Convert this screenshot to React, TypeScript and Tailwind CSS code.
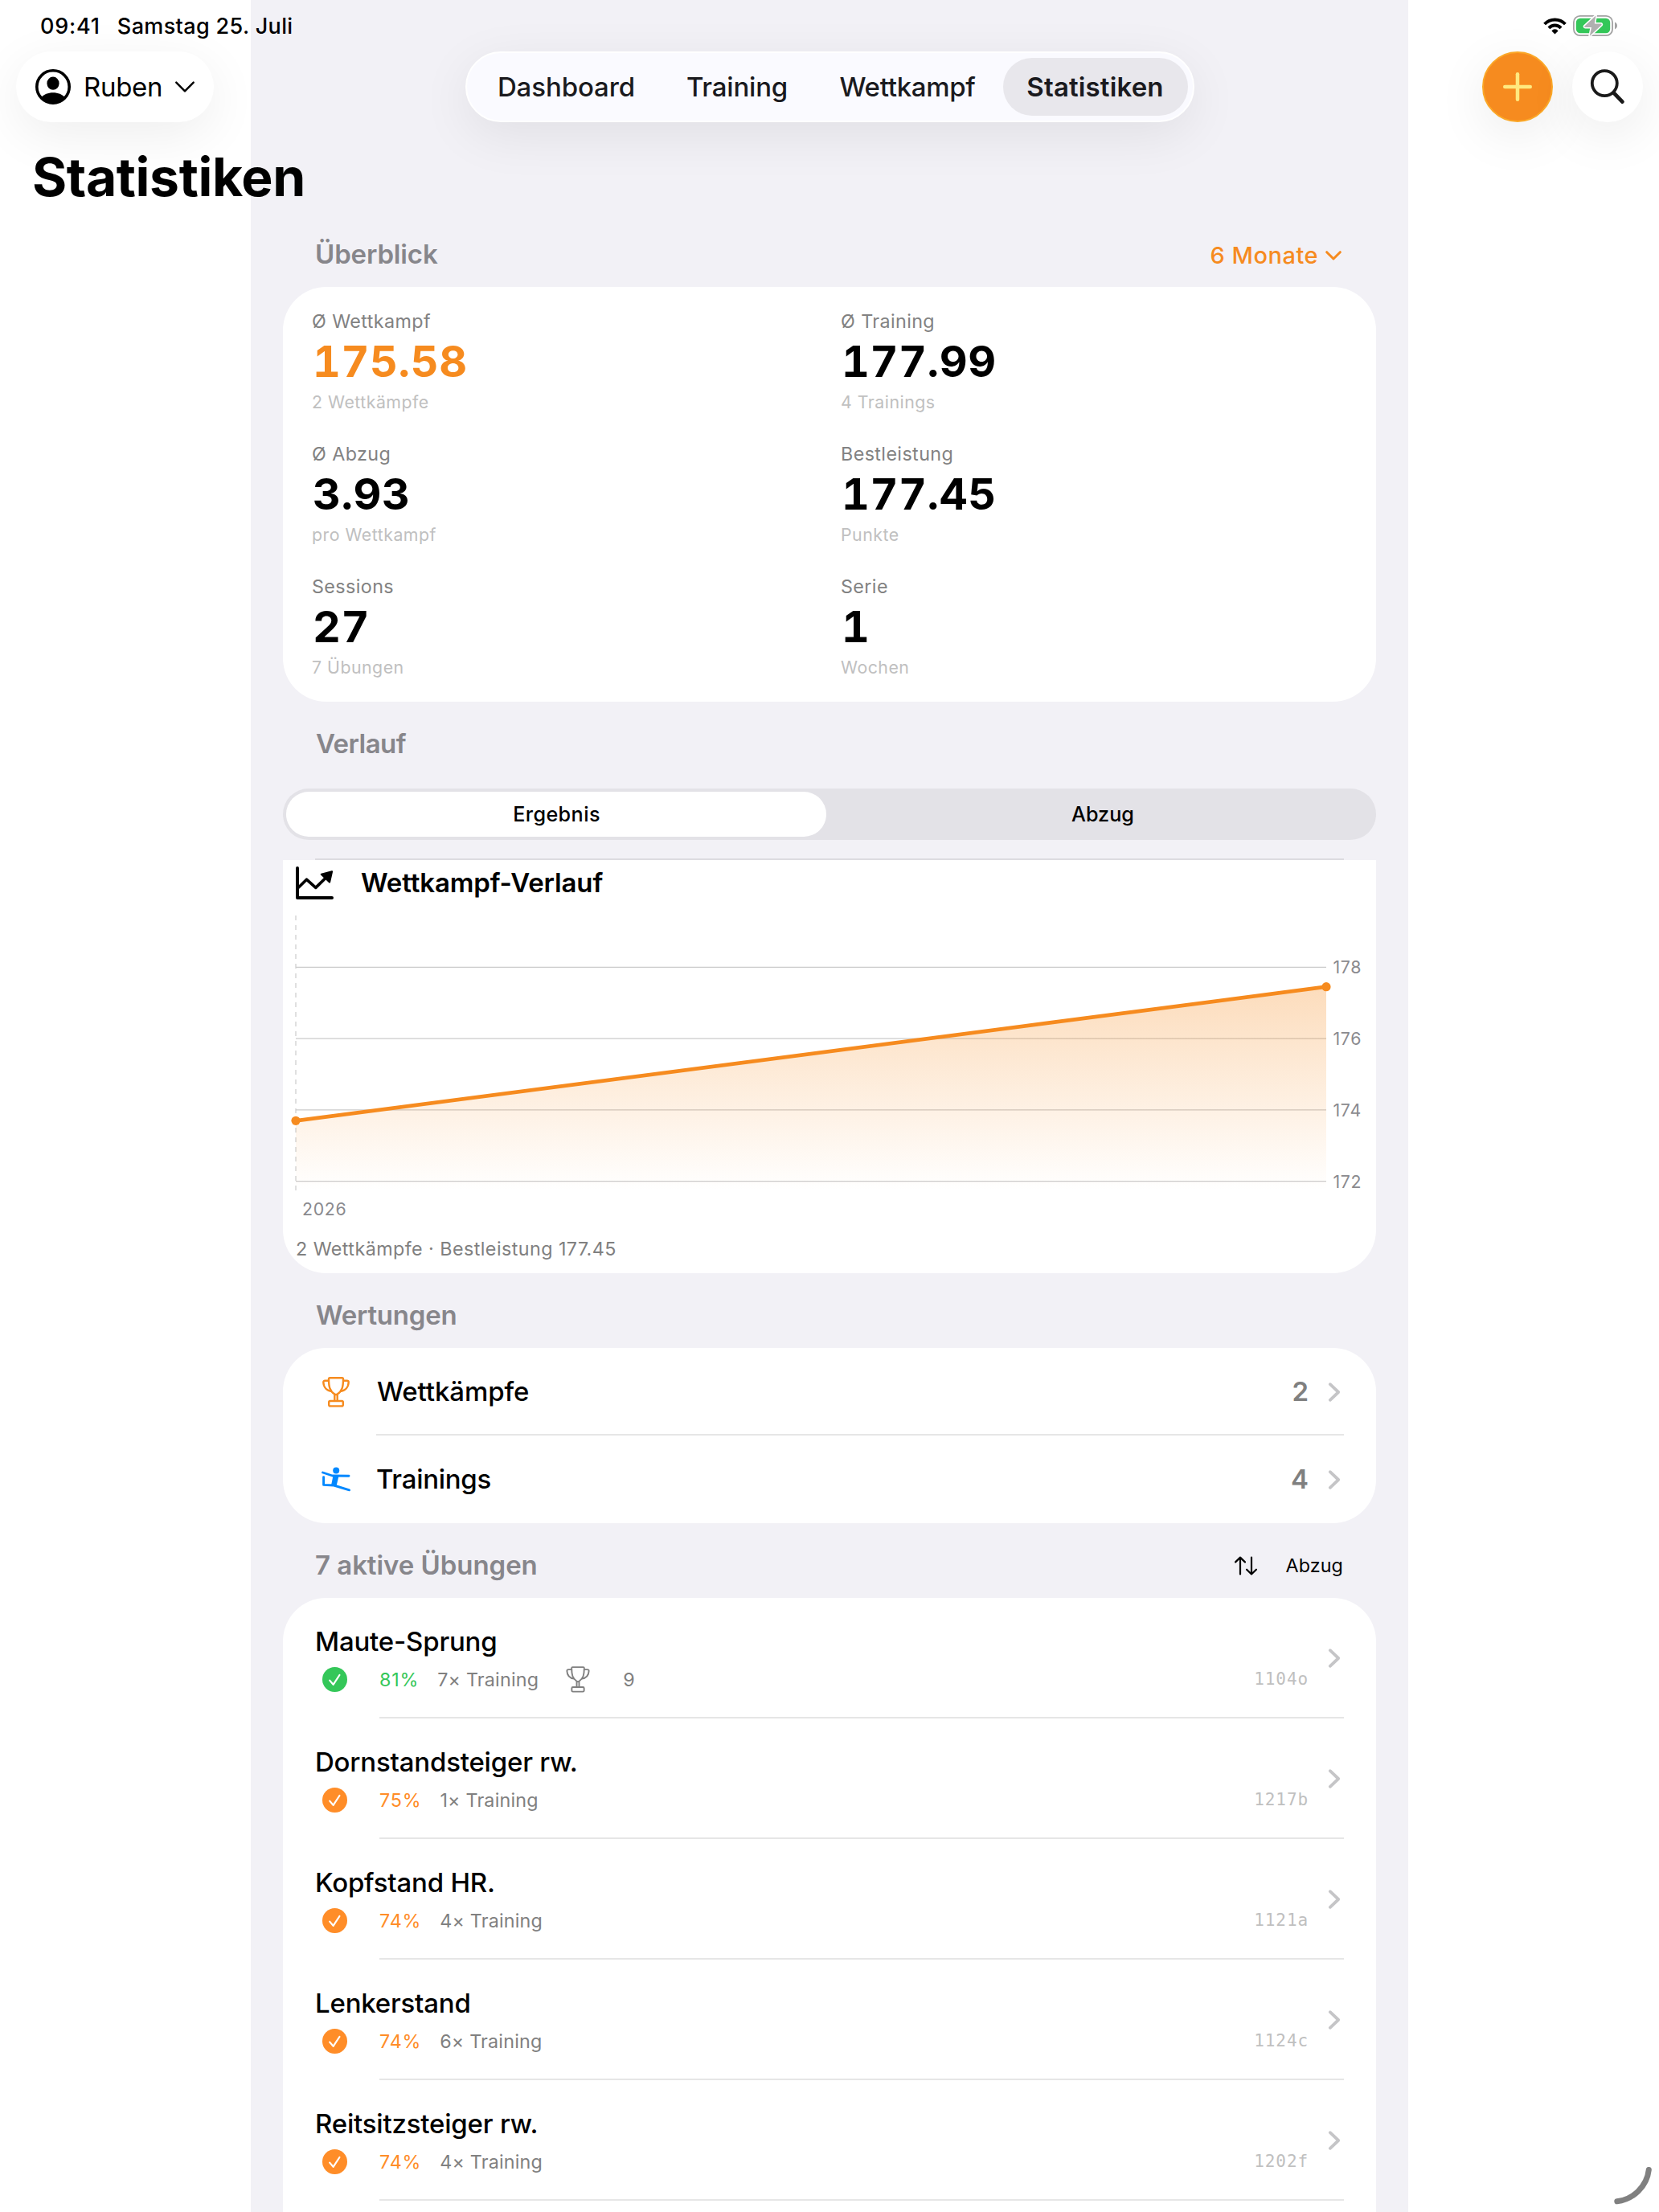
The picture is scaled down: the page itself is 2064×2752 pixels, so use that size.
import { Plus } from 'lucide-react';
import { clsx } from 'clsx';

interface Stat {
  label: string;
  value: string;
  hint: string;
  accent?: boolean;
}

interface Exercise {
  name: string;
  code: string;
  rate: number;
  trainings: number;
  competitions?: number;
}

const STATS: Stat[] = [
  { label: 'Ø Wettkampf', value: '175.58', hint: '2 Wettkämpfe', accent: true },
  { label: 'Ø Training', value: '177.99', hint: '4 Trainings' },
  { label: 'Ø Abzug', value: '3.93', hint: 'pro Wettkampf' },
  { label: 'Bestleistung', value: '177.45', hint: 'Punkte' },
  { label: 'Sessions', value: '27', hint: '7 Übungen' },
  { label: 'Serie', value: '1', hint: 'Wochen' },
];

const EXERCISES: Exercise[] = [
  { name: 'Maute-Sprung', code: '1104o', rate: 81, trainings: 7, competitions: 9 },
  { name: 'Dornstandsteiger rw.', code: '1217b', rate: 75, trainings: 1 },
  { name: 'Kopfstand HR.', code: '1121a', rate: 74, trainings: 4 },
  { name: 'Lenkerstand', code: '1124c', rate: 74, trainings: 6 },
  { name: 'Reitsitzsteiger rw.', code: '1202f', rate: 74, trainings: 4 },
];

// --- Icons ---

function WifiIcon() {
  return (
    <svg width="29" height="21" viewBox="0 0 29 21" fill="none" stroke="black" strokeWidth="3.9">
      <path d="M1.6 8A17.8 17.8 0 0 1 27.4 8" />
      <path d="M6.9 12.8A10.5 10.5 0 0 1 22.1 12.8" />
      <path d="M14.5 20.6L10.4 16.4A5 5 0 0 1 18.6 16.4Z" fill="black" stroke="none" />
    </svg>
  );
}

function BatteryIcon() {
  return (
    <svg width="55" height="28" viewBox="0 -1 55 28" fill="none">
      <rect x="0.9" y="0.9" width="48.2" height="24.2" rx="7.8" stroke="#a3a3a3" strokeWidth="1.8" />
      <rect x="3.8" y="3.7" width="42.4" height="18.6" rx="5.2" fill="#34c759" />
      <path d="M52 8.6C54 9.6 55 11 55 13S54 16.4 52 17.4Z" fill="#a3a3a3" />
      <path
        d="M28.4 0.4L14.4 13.4C13.9 14.2 14.2 14.9 15.2 14.9H23L20.8 25.8L35.4 12.2C36 11.4 35.6 10.6 34.6 10.6H26.8Z"
        fill="#b0b0b0"
        stroke="white"
        strokeWidth="3"
        strokeLinejoin="round"
        className="[paint-order:stroke]"
      />
    </svg>
  );
}

function ProfileIcon() {
  return (
    <svg width="44" height="44" viewBox="0 0 44 44">
      <circle cx="22" cy="22" r="20.2" fill="none" stroke="black" strokeWidth="3.6" />
      <ellipse cx="22" cy="17.7" rx="7.6" ry="8.1" />
      <path d="M7 35.5C10.5 31.3 15.8 29.2 22 29.2S33.5 31.3 37 35.5A20 20 0 0 1 7 35.5Z" />
    </svg>
  );
}

function ChevronRight({ className }: { className?: string }) {
  return (
    <svg width="24" height="28" viewBox="0 0 24 28" fill="none" stroke="#c5c5c7" strokeWidth="3.8" strokeLinecap="round" strokeLinejoin="round" className={className}>
      <path d="M6.8 4.2L17.2 14L6.8 23.8" />
    </svg>
  );
}

function TrophyIcon({ className, width }: { className: string; width: number }) {
  return (
    <svg viewBox="0 0 34 38" fill="none" stroke="currentColor" strokeWidth={width} strokeLinejoin="round" className={className}>
      <path d="M15.3 30V21.6C9.2 17.4 8 12 8 2.7Q8 1.3 9.4 1.3H24.6Q26 1.3 26 2.7C26 12 24.8 17.4 18.7 21.6V30" />
      <path d="M15.3 21.6Q17 22.6 18.7 21.6" />
      <path d="M8.1 4.8H3.3Q1.3 4.8 1.3 6.8C1.5 12.8 5.4 17.2 12 18" />
      <path d="M25.9 4.8H30.7Q32.7 4.8 32.7 6.8C32.5 12.8 28.6 17.2 22 18" />
      <rect x="8.2" y="30" width="17.6" height="6.4" rx="1.6" />
    </svg>
  );
}

function GymnastIcon() {
  return (
    <svg width="37" height="32" viewBox="0 0 37 32" fill="none" stroke="#0088ff" strokeWidth="2.9" strokeLinecap="round" strokeLinejoin="round">
      <circle cx="18.2" cy="4.6" r="4" fill="#0088ff" stroke="none" />
      <path d="M1.6 7L13.5 11L34 11.2" />
      <path d="M2.6 12.6V22.4L15.5 23L34.6 28.8" />
      <path d="M15.2 11.5H20.6L18 22.6L13 22.2Z" fill="#0088ff" strokeWidth="1.6" />
    </svg>
  );
}

function TrendIcon() {
  return (
    <svg width="47" height="42" viewBox="0 0 47 42" fill="none" stroke="black" strokeLinecap="round" strokeLinejoin="round">
      <path d="M2 2V39H45" strokeWidth="4" />
      <path d="M3.5 26L13.4 16.2L24.8 26.4L39 12.5" strokeWidth="3.6" />
      <path d="M45 6.2L31.8 9.8L42 19.4Z" fill="black" strokeWidth="2.2" />
    </svg>
  );
}

function SortIcon() {
  return (
    <svg width="28" height="24" viewBox="0 0 28 24" fill="none" stroke="black" strokeWidth="2.2" strokeLinecap="round" strokeLinejoin="round">
      <path d="M7 22.5V1.6M1.1 7.4L7 1.6L12.9 7.4" />
      <path d="M21 1.6V22.5M15.1 16.7L21 22.5L26.9 16.7" />
    </svg>
  );
}

function CheckBadge({ className }: { className: string }) {
  return (
    <svg width="31" height="31" viewBox="0 0 31 31" fill="none" className={className}>
      <circle cx="15.5" cy="15.5" r="15.5" fill="currentColor" />
      <path d="M9.2 16.6L13.6 21.8L21.4 10" stroke="white" strokeWidth="2.2" strokeLinecap="round" strokeLinejoin="round" />
    </svg>
  );
}

// --- Header ---

const TABS = [
  { name: 'Dashboard', style: 'w-[236px] font-medium tracking-[-0.1px]' },
  { name: 'Training', style: 'w-[190px] pr-px font-medium tracking-[-0.2px]' },
  { name: 'Wettkampf', style: 'w-[235px] pr-[2px] font-medium tracking-[-0.3px]' },
  { name: 'Statistiken', style: 'w-[230px] rounded-full bg-[#e8e7ec] font-semibold tracking-[0.15px]' },
];

function Header() {
  return (
    <header className="absolute inset-x-0 top-0">
      <div className="flex h-16 items-center pr-[52px] pl-[50px] text-[27px] font-medium">
        <span className="pt-[2px] tracking-[0.8px]">09:41</span>
        <span className="ml-[21px] pt-[2px] tracking-[0.35px]">Samstag 25. Juli</span>
        <div className="ml-auto flex items-center gap-2">
          <WifiIcon />
          <BatteryIcon />
        </div>
      </div>

      <div className="grid h-[88px] grid-cols-[1fr_auto_1fr] px-5 text-[33px]">
        <button className="flex w-[246px] items-center rounded-full bg-white pl-6 shadow-[0_16px_64px_rgba(0,0,0,0.07)]">
          <ProfileIcon />
          <span className="ml-4 pt-[2px] tracking-[-0.3px]">Ruben</span>
          <svg width="24" height="14" viewBox="0 0 24 14" fill="none" stroke="black" strokeWidth="2.4" strokeLinecap="round" strokeLinejoin="round" className="ml-[16px]">
            <path d="M1.3 1.6L12 12.4L22.7 1.6" />
          </svg>
        </button>

        <nav className="flex items-center rounded-full border-2 border-white bg-[#fafaff] p-1.5 text-[#1a1a1e] shadow-[0_16px_64px_rgba(0,0,0,0.075)]">
          {TABS.map((tab) => (
            <a key={tab.name} className={clsx('flex h-[72px] items-center justify-center pt-[2px]', tab.style)}>
              {tab.name}
            </a>
          ))}
        </nav>

        <div className="flex justify-end gap-6">
          <button className="flex size-[88px] items-center justify-center rounded-full border-2 border-[#fba828] bg-[#f68b1f] shadow-[0_16px_64px_rgba(0,0,0,0.08)]">
            <Plus size={54} strokeWidth={2} className="text-[#ffe97f]" />
          </button>
          <button className="flex size-[88px] items-center justify-center rounded-full bg-white shadow-[0_16px_64px_rgba(0,0,0,0.08)]">
            <svg width="44" height="44" viewBox="0 0 44 44" fill="none" stroke="#1a1a1a" strokeLinecap="round">
              <circle cx="18.3" cy="17.6" r="15.5" strokeWidth="3.8" />
              <path d="M29.8 29.6L40.4 40.6" strokeWidth="4.8" />
            </svg>
          </button>
        </div>
      </div>

      <h1 className="mt-7 ml-10 text-[66px] leading-[80px] font-bold tracking-[-0.4px]">Statistiken</h1>
    </header>
  );
}

// --- Sections ---

function Overview() {
  return (
    <section>
      <div className="flex h-[82px] items-center justify-between px-[41px]">
        <h2 className="-ml-px pt-[2px] text-[33px] font-semibold tracking-[-0.15px] text-[#87868b]">Überblick</h2>
        <button className="flex items-center pt-[3px] text-[29px] font-medium tracking-[0.5px] text-[#f68b1f]">
          6 Monate
          <svg width="20" height="12" viewBox="0 0 20 12" fill="none" stroke="currentColor" strokeWidth="3" strokeLinecap="round" strokeLinejoin="round" className="mr-[2px] ml-[9px]">
            <path d="M1.7 1.7L10 10L18.3 1.7" />
          </svg>
        </button>
      </div>
      <div className="grid h-[516px] grid-cols-[658px_1fr] content-start gap-y-[33px] rounded-[54px] bg-white pt-[27px] pl-9">
        {STATS.map((stat) => (
          <div key={stat.label}>
            <div className="text-[23.3px] leading-[31px] tracking-[0.4px] text-[#828282]">{stat.label}</div>
            <div className={clsx('pl-px text-[54px] leading-[69px] font-bold tracking-[0.6px] tabular-nums', stat.accent && 'text-[#f68b1f]')}>
              {stat.value}
            </div>
            <div className="text-[21.3px] leading-[32px] tracking-[0.5px] text-[#c0c0c0]">{stat.hint}</div>
          </div>
        ))}
      </div>
    </section>
  );
}

// Y positions of the 178, 176, 174 and 172 lines
const GRID = [
  { value: 178, y: 73.4 },
  { value: 176, y: 162.2 },
  { value: 174, y: 250.9 },
  { value: 172, y: 339.6 },
];

function History() {
  return (
    <section>
      <h2 className="mb-[3px] flex h-[105px] items-center px-[41px] pt-px text-[33px] font-semibold tracking-[-0.55px] text-[#87868b]">Verlauf</h2>
      <div className="flex h-16 rounded-full bg-[#e3e2e7] p-1 text-[25.2px] font-medium">
        <div className="flex w-[672px] items-center justify-center rounded-full bg-white pt-[2px] pl-px tracking-[0.4px]">Ergebnis</div>
        <div className="flex flex-1 items-center justify-center pt-[2px] pl-2">Abzug</div>
      </div>
      <div className="mx-10 mt-[23px] h-0.5 bg-[#dcdbe0]" />
      <div className="h-[514px] rounded-b-[54px] bg-white pt-2">
        <div className="flex h-[42px] items-center pl-4">
          <TrendIcon />
          <h3 className="ml-[34px] pb-[2px] text-[33px] leading-[40px] font-semibold tracking-[-0.15px]">Wettkampf-Verlauf</h3>
        </div>
        <svg width="1360" height="390" viewBox="0 0 1360 390" className="mt-[10px] mb-[18px] block">
          <defs>
            <linearGradient id="area" gradientUnits="userSpaceOnUse" x1="0" y1="97.7" x2="0" y2="351">
              <stop offset="0" stopColor="#f68b1f" stopOpacity="0.3" />
              <stop offset="1" stopColor="#f68b1f" stopOpacity="0" />
            </linearGradient>
          </defs>
          <path d="M16 9V351" stroke="#e0e0e0" strokeWidth="2" strokeDasharray="6 6" />
          {GRID.map((line) => (
            <g key={line.value}>
              <path d={`M16 ${line.y}H1298`} stroke="#cbcbcb" strokeWidth="1.2" />
              <text x="1306.5" y={line.y + 8} fill="#8a8a8e" className="text-[21.3px] tracking-[0.7px]">
                {line.value}
              </text>
            </g>
          ))}
          <path d="M16 264.3L1298 97.7V351H16Z" fill="url(#area)" />
          <path d="M16 264.3L1298 97.7" stroke="#f68b1f" strokeWidth="4.8" />
          <circle cx="16" cy="264.3" r="5.6" fill="#f68b1f" />
          <circle cx="1298" cy="97.7" r="5.6" fill="#f68b1f" />
          <text x="24" y="381.5" fill="#8a8a8e" className="text-[21.3px] tracking-[0.7px]">2026</text>
        </svg>
        <p className="pl-4 text-[23.3px] leading-[31px] tracking-[0.44px] text-[#808080]">2 Wettkämpfe · Bestleistung 177.45</p>
      </div>
    </section>
  );
}

function Scores() {
  return (
    <section>
      <h2 className="flex h-[93px] items-center px-[41px] pt-[13px] text-[33px] font-semibold tracking-[-0.25px] text-[#87868b]">Wertungen</h2>
      <div className="rounded-[54px] bg-white text-[33px]">
        <div className="flex h-[107px] items-center px-10">
          <div className="flex w-[52px] justify-center">
            <TrophyIcon width={2.4} className="mt-[2px] h-[38px] w-[34px] text-[#f68b1f]" />
          </div>
          <span className="ml-[25px] pt-[2px] font-medium tracking-[-0.1px]">Wettkämpfe</span>
          <span className="mr-5 ml-auto pt-[2px] font-semibold text-[#808080]">2</span>
          <ChevronRight className="mt-[3px]" />
        </div>
        <div className="mr-10 ml-[116px] h-0.5 bg-[#e6e6e6]" />
        <div className="flex h-[109px] items-center px-10">
          <div className="flex w-[52px] justify-center">
            <GymnastIcon />
          </div>
          <span className="ml-[24px] font-medium tracking-[-0.3px]">Trainings</span>
          <span className="mr-5 ml-auto font-semibold text-[#808080]">4</span>
          <ChevronRight className="mt-[1px]" />
        </div>
      </div>
    </section>
  );
}

function Exercises() {
  return (
    <section>
      <div className="flex h-[93px] items-center justify-between px-[41px] pt-[13px]">
        <h2 className="-ml-px text-[33px] font-semibold tracking-[-0.05px] text-[#87868b]">7 aktive Übungen</h2>
        <button className="flex items-center gap-9 text-[23.3px] tracking-[0.09px]">
          <SortIcon />
          Abzug
        </button>
      </div>
      <div className="rounded-t-[54px] bg-white">
        {EXERCISES.map((ex) => (
          <div key={ex.code}>
            <div className="flex h-[148px] px-10">
              <div className="flex-1 pt-8">
                <div className="text-[33px] leading-[44px] font-medium tracking-[-0.2px]">{ex.name}</div>
                <div className="mt-2.5 flex h-[31px] items-center text-[23.3px] leading-[29px] text-[#808080]">
                  <CheckBadge className={clsx('ml-[9px]', ex.rate > 80 ? 'text-[#34c759]' : 'text-[#ff8d28]')} />
                  <span className={clsx('ml-10 tracking-[0.8px]', ex.rate > 80 ? 'text-[#34c759]' : 'text-[#ff8d28]')}>
                    {ex.rate}%
                  </span>
                  <span className="ml-[23px] tracking-[0.2px]">{ex.trainings}× Training</span>
                  {ex.competitions && (
                    <>
                      <TrophyIcon width={2.2} className="ml-[34px] h-[33px] w-[30px]" />
                      <span className="ml-[41px]">{ex.competitions}</span>
                    </>
                  )}
                  <span className="ml-auto font-['DejaVu_Sans_Mono',monospace] text-[21px] leading-[29px] tracking-[0.9px] text-[#c0c0c0]">{ex.code}</span>
                </div>
              </div>
              <ChevronRight className="mt-[61px] ml-5" />
            </div>
            <div className="mr-10 ml-[120px] h-0.5 bg-[#e6e6e6]" />
          </div>
        ))}
        <div className="h-20" />
      </div>
    </section>
  );
}

export default function App() {
  return (
    <div className="relative h-[2752px] w-[2064px] overflow-hidden bg-white font-['Inter',sans-serif] text-black">
      <main className="mx-auto min-h-full w-[1440px] bg-[#f2f1f6] px-10 pt-[275px]">
        <Overview />
        <History />
        <Scores />
        <Exercises />
      </main>

      <Header />

      {/* Window resize handle */}
      <svg width="56" height="56" viewBox="0 0 56 56" fill="none" className="absolute right-0 bottom-0">
        <path d="M3.8 42.8C24 40.5 41 24 43.3 3.5" stroke="#808080" strokeWidth="7" strokeLinecap="round" />
      </svg>
    </div>
  );
}
